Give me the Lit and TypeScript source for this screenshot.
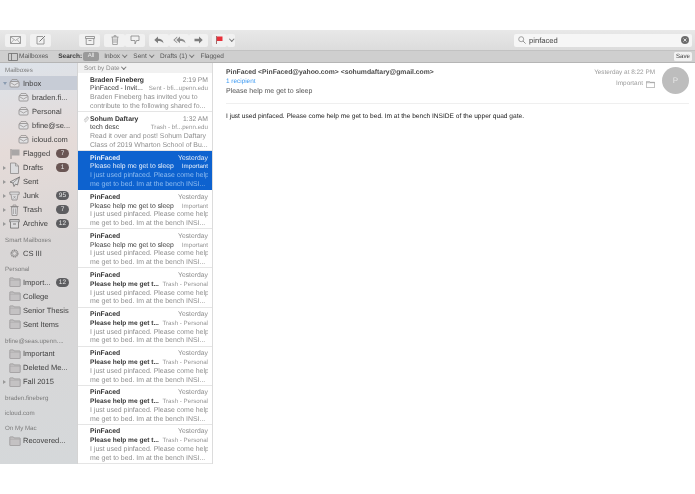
import { LitElement, css, html, svg } from "lit";
import { customElement } from "lit/decorators.js";

const icon = (w: number, h: number, body: unknown, cls = "") =>
  html`<svg class=${cls} width=${w} height=${h} viewBox="0 0 ${w} ${h}" fill="none">${body}</svg>`;

const stroke = "#8d8a8a";

const icons: Record<string, () => unknown> = {
  envelope: () =>
    icon(11, 10, svg`<path d="M1.5 3.5h8a1 1 0 0 1 .5 1v3.5a1 1 0 0 1-1 1H2a1 1 0 0 1-1-1V4.5a1 1 0 0 1 .5-1z" fill="#e2e2e4" stroke=${stroke} stroke-width=".8"/><path d="M1.2 4.5 5.5 7l4.3-2.5" stroke=${stroke} stroke-width=".7"/><path d="M1.5 3.5 3 1.5h5l1.5 2" stroke=${stroke} stroke-width=".7"/>`),
  flag: () =>
    icon(11, 11, svg`<path d="M2 1v10" stroke="#8a8787" stroke-width="1"/><path d="M2.5 1.500h8v6h-8z" fill="#a9a7a7"/>`),
  drafts: () =>
    icon(11, 12, svg`<path d="M1.5 1h5l3 3v7.500h-8z" fill="#dcdcde" stroke=${stroke} stroke-width=".8"/><path d="M6.500 1v3h3" stroke=${stroke} stroke-width=".7"/>`),
  sent: () =>
    icon(11, 11, svg`<path d="M10.500 1 1 6l3 1 1 3.500 1.500-2.500 2 1z" fill="#dcdcde" stroke="#6f6d6d" stroke-width=".8"/><path d="M10.500 1 4 7" stroke="#6f6d6d" stroke-width=".6"/>`),
  junk: () =>
    icon(11, 11, svg`<path d="M.8 2h9.400v2.400H.8z" fill="#dcdcde" stroke=${stroke} stroke-width=".8"/><path d="M2 4.400 3 10h5l1-5.600" fill="#dcdcde" stroke=${stroke} stroke-width=".8"/><path d="M4.500 6 6.500 8.500M6.500 6 4.500 8.500" stroke=${stroke} stroke-width=".6"/>`),
  trash: () =>
    icon(11, 12, svg`<path d="M1.500 2.500h8" stroke=${stroke} stroke-width="1"/><path d="M4 2.400V1h3v1.400" stroke=${stroke} stroke-width=".7"/><path d="M2.500 3 3 11.500h5L8.500 3z" fill="#dcdcde" stroke=${stroke} stroke-width=".8"/><path d="M4.500 4.500v5.500M6.500 4.500v5.500" stroke=${stroke} stroke-width=".6"/>`),
  archive: () =>
    icon(11, 11, svg`<path d="M.8 1.500h9.400v2.600H.8z" fill="#c9c9cb" stroke="#6f6d6d" stroke-width=".8"/><path d="M1.500 4.100v6h8v-6" fill="#dcdcde" stroke="#6f6d6d" stroke-width=".8"/><path d="M4 6h3" stroke="#6f6d6d" stroke-width=".9"/>`),
  gear: () =>
    icon(11, 11, svg`<circle cx="5.500" cy="5.500" r="3.300" stroke="#8b8989" stroke-width="1.500" stroke-dasharray="1.300 .5" fill="none"/><circle cx="5.500" cy="5.500" r="2" stroke="#8b8989" stroke-width=".6"/>`),
  folder: () =>
    icon(12, 10, svg`<path d="M.8 2.800V1.400c0-.3.2-.5.5-.5h3l.8 1h5.600c.3 0 .5.2.5.5v6.700c0 .3-.2.5-.5.5H1.300c-.3 0-.5-.2-.5-.5z" fill="#c4c2c3" stroke="#908e8f" stroke-width=".7"/><path d="M1 3.200h10" stroke="#a6a4a5" stroke-width=".6"/>`),
};

type SideRow = { label: string; icon?: string; badge?: string; arrow?: "open" | "closed"; child?: boolean; sel?: boolean };
type SideGroup = { title: string; rows: SideRow[] };

const groups: SideGroup[] = [
  {
    title: "Mailboxes",
    rows: [
      { label: "Inbox", icon: "envelope", arrow: "open", sel: true },
      { label: "braden.fi...", icon: "envelope", child: true },
      { label: "Personal", icon: "envelope", child: true },
      { label: "bfine@se...", icon: "envelope", child: true },
      { label: "icloud.com", icon: "envelope", child: true },
      { label: "Flagged", icon: "flag", badge: "7" },
      { label: "Drafts", icon: "drafts", badge: "1", arrow: "closed" },
      { label: "Sent", icon: "sent", arrow: "closed" },
      { label: "Junk", icon: "junk", badge: "95", arrow: "closed" },
      { label: "Trash", icon: "trash", badge: "7", arrow: "closed" },
      { label: "Archive", icon: "archive", badge: "12", arrow: "closed" },
    ],
  },
  { title: "Smart Mailboxes", rows: [{ label: "CS III", icon: "gear" }] },
  {
    title: "Personal",
    rows: [
      { label: "Import...", icon: "folder", badge: "12" },
      { label: "College", icon: "folder" },
      { label: "Senior Thesis", icon: "folder" },
      { label: "Sent Items", icon: "folder" },
    ],
  },
  {
    title: "bfine@seas.upenn....",
    rows: [
      { label: "Important", icon: "folder" },
      { label: "Deleted Me...", icon: "folder" },
      { label: "Fall 2015", icon: "folder", arrow: "closed" },
    ],
  },
  { title: "braden.fineberg", rows: [] },
  { title: "icloud.com", rows: [] },
  { title: "On My Mac", rows: [{ label: "Recovered...", icon: "folder" }] },
];

type Msg = { from: string; time: string; subject: string; tag: string; l1: string; l2: string; clip?: boolean; sel?: boolean; strong?: boolean };

const pfBody = { l1: "I just used pinfaced. Please come help", l2: "me get to bed. Im at the bench INSI..." };
const pfImportant = { from: "PinFaced", time: "Yesterday", subject: "Please help me get to sleep", tag: "Important", ...pfBody };
const pfTrash = { from: "PinFaced", time: "Yesterday", subject: "Please help me get t...", tag: "Trash - Personal", strong: true, ...pfBody };

const messages: Msg[] = [
  { from: "Braden Fineberg", time: "2:19 PM", subject: "PinFaced - Invit...", tag: "Sent - bfi...upenn.edu", l1: "Braden Fineberg has invited you to", l2: "contribute to the following shared fo..." },
  { from: "Sohum Daftary", time: "1:32 AM", subject: "tech desc", tag: "Trash - bf...penn.edu", l1: "Read it over and post! Sohum Daftary", l2: "Class of 2019 Wharton School of Bu...", clip: true },
  { ...pfImportant, sel: true },
  pfImportant,
  pfImportant,
  pfTrash,
  pfTrash,
  pfTrash,
  pfTrash,
  pfTrash,
];

@customElement("app-root")
export class AppRoot extends LitElement {
  renderSideRow(r: SideRow) {
    const arrow = r.arrow ? html`<i class="arrow ${r.arrow}"></i>` : "";
    const cls = "side-row" + (r.child ? " child" : "") + (r.sel ? " sel" : "");
    const dark = ["Flagged", "Drafts"].includes(r.label);
    return html`<div class=${cls}>
      <span class="arrow-slot">${arrow}</span>
      <span class="side-icon">${r.icon ? icons[r.icon]() : ""}</span>
      <span class="side-label">${r.label}</span>
      ${r.badge ? html`<span class="badge ${dark ? "brown" : ""}">${r.badge}</span>` : ""}
    </div>`;
  }

  renderMessage(m: Msg) {
    return html`<div class="msg ${m.sel ? "sel" : ""}">
      ${m.clip
        ? html`<svg class="clip" width="6" height="8" viewBox="0 0 6 8" fill="none"><path d="M4.800 2.200 2 5.600c-.7.9.5 1.800 1.200 1L5.200 4c1-1.500-.8-3-2-1.500L1 5.200" stroke="#b5b5b5" stroke-width=".7"/></svg>`
        : ""}
      <div class="line"><span class="from">${m.from}</span><span class="time">${m.time}</span></div>
      <div class="line"><span class="subject ${m.strong ? "strong" : ""}">${m.subject}</span><span class="tag">${m.tag}</span></div>
      <div class="preview">${m.l1}</div>
      <div class="preview">${m.l2}</div>
    </div>`;
  }

  render() {
    return html`
      <div class="top-space"></div>
      <div class="toolbar">
        <div class="tools">
          <button class="btn w21">
            <svg width="11" height="8" viewBox="0 0 11 8" fill="none"><path d="M.5.500h10v7H.5z" stroke="#858585" stroke-width=".8"/><path d="M.5.800 5.500 4.500 10.500.800M.8 7.300 4 3.500M10.200 7.300 7 3.500" stroke="#858585" stroke-width=".6"/></svg>
          </button>
          <button class="btn w21">
            <svg width="10" height="10" viewBox="0 0 10 10" fill="none"><path d="M7 1.500H1v7.500h7V3.500" stroke="#858585" stroke-width=".8"/><path d="M3.500 6.500 9 1" stroke="#777" stroke-width="1"/></svg>
          </button>
          <button class="btn w21 ml-gap">
            <svg width="10" height="9" viewBox="0 0 10 9" fill="none"><path d="M.5.500h9v2h-9zM1.200 2.500v6h7.600v-6" stroke="#858585" stroke-width=".8"/><path d="M3.500 4.500h3" stroke="#858585" stroke-width=".8"/></svg>
          </button>
          <div class="seg">
            <button class="btn w21">
              <svg width="8" height="10" viewBox="0 0 8 10" fill="none"><path d="M.5 2h7M3 2V.7h2V2M1.300 2l.4 7.500h4.600L6.700 2M3 3.500v4.500M5 3.500v4.500" stroke="#858585" stroke-width=".7"/></svg>
            </button>
            <button class="btn w20">
              <svg width="10" height="10" viewBox="0 0 10 10" fill="none"><path d="M1 1h8v4.500H6.500L5 9V5.500H1z" stroke="#858585" stroke-width=".8"/></svg>
            </button>
          </div>
          <div class="seg">
            <button class="btn w20">
              <svg width="10" height="8" viewBox="0 0 10 8"><path d="M4 .500v2.200c3 0 5 1 5.500 4.500C8.500 5.500 6.500 5 4 5v2.300L.3 3.900z" fill="#7c7c7c"/></svg>
            </button>
            <button class="btn w20">
              <svg width="13" height="8" viewBox="0 0 13 8"><path d="M7 .500v2.200c3 0 5 1 5.500 4.500C11.500 5.500 9.500 5 7 5v2.300L3.300 3.900z" fill="#8c8c8c"/><path d="M4.200.500v1.200L1.700 3.900l2.500 2.300v1.100L.3 3.900z" fill="#8c8c8c"/></svg>
            </button>
            <button class="btn w19">
              <svg width="9" height="8" viewBox="0 0 9 8"><path d="M5 .500 8.700 4 5 7.500V5.300H.500V2.700H5z" fill="#7c7c7c"/></svg>
            </button>
          </div>
          <div class="seg">
            <button class="btn w15">
              <svg width="7" height="8" viewBox="0 0 7 8"><path d="M.5 0v8" stroke="#8c4a4a" stroke-width=".8"/><path d="M1 .500h5.500v4.500H1z" fill="#e8303a"/></svg>
            </button>
            <button class="btn w8"><i class="chev"></i></button>
          </div>
        </div>
        <div class="search">
          <svg width="8" height="8" viewBox="0 0 8 8" fill="none"><circle cx="3.200" cy="3.200" r="2.500" stroke="#8a8a8a" stroke-width=".8"/><path d="M5 5l2.600 2.600" stroke="#8a8a8a" stroke-width=".9"/></svg>
          <span class="search-text">pinfaced</span>
          <span class="clear">
            <svg width="8" height="8" viewBox="0 0 8 8"><circle cx="4" cy="4" r="4" fill="#6d6d6d"/><path d="M2.500 2.500l3 3M5.500 2.500l-3 3" stroke="#e8e8e8" stroke-width=".9"/></svg>
          </span>
        </div>
      </div>
      <div class="favbar">
        <svg class="pane" width="10" height="8" viewBox="0 0 10 8" fill="none"><path d="M.5.500h9v7h-9zM3.500.500v7" stroke="#6c6c6c" stroke-width=".8"/></svg>
        <span class="fav boxes">Mailboxes</span>
        <span class="fav bold">Search:</span>
        <span class="pill">All</span>
        <span class="fav f-inbox">Inbox <i class="chev"></i></span>
        <span class="fav">Sent <i class="chev"></i></span>
        <span class="fav">Drafts (1) <i class="chev"></i></span>
        <span class="fav">Flagged</span>
        <span class="save">Save</span>
      </div>
      <div class="main">
        <aside class="sidebar">
          ${groups.map(
            (g) => html`<div class="group">
              <div class="group-title">${g.title}</div>
              ${g.rows.map((r) => this.renderSideRow(r))}
            </div>`
          )}
        </aside>
        <section class="list">
          <div class="sort">Sort by Date <i class="chev"></i></div>
          ${messages.map((m) => this.renderMessage(m))}
        </section>
        <section class="detail">
          <div class="head">
            <div class="head-left">
              <div class="sender">PinFaced &lt;PinFaced@yahoo.com&gt; &lt;sohumdaftary@gmail.com&gt;</div>
              <div class="recipient">1 recipient</div>
              <div class="head-subject">Please help me get to sleep</div>
            </div>
            <div class="head-right">
              <div class="date">Yesterday at 8:22 PM</div>
              <div class="mailbox">
                Important
                <svg width="9" height="7" viewBox="0 0 9 7" fill="none"><path d="M.4 6.600V.4h3l.7.9h4.500v5.300z M.4 1.700h8.200" stroke="#8f8f8f" stroke-width=".6"/></svg>
              </div>
            </div>
            <div class="avatar">P</div>
          </div>
          <div class="body-text">I just used pinfaced. Please come help me get to bed. Im at the bench INSIDE of the upper quad gate.</div>
        </section>
      </div>
    `;
  }

  static styles = css`
    :host {
      display: block;
      width: 695px;
      height: 494px;
      background: #fff;
      font-family: "Liberation Sans", Arial, sans-serif;
      text-rendering: geometricPrecision;
      color: #333;
      overflow: hidden;
      filter: blur(0.25px);
    }
    * {
      box-sizing: border-box;
    }
    .top-space {
      height: 30px;
    }
    .toolbar {
      height: 20px;
      background: linear-gradient(#e8e8e8, #dcdcdc);
      display: flex;
      align-items: center;
      justify-content: space-between;
      padding: 0 3px 0 5px;
    }
    .tools {
      display: flex;
      align-items: center;
      gap: 4px;
    }
    .seg {
      display: flex;
    }
    .btn {
      height: 13px;
      padding: 0;
      border: 0;
      border-radius: 2px;
      background: #f1f1f1;
      display: flex;
      align-items: center;
      justify-content: center;
    }
    .w21 {
      width: 21px;
    }
    .w20 {
      width: 20px;
    }
    .w19 {
      width: 19px;
    }
    .w15 {
      width: 15px;
    }
    .w8 {
      width: 8px;
    }
    .ml-gap {
      margin-left: 24px;
    }
    .chev {
      display: inline-block;
      width: 3.500px;
      height: 3.500px;
      border-right: 1px solid #777;
      border-bottom: 1px solid #777;
      transform: rotate(45deg);
      position: relative;
      top: -1.500px;
      margin-left: 1px;
    }
    .search {
      width: 178px;
      height: 13px;
      background: #f6f6f6;
      border-radius: 2px;
      display: flex;
      align-items: center;
      padding: 0 3px 0 4px;
      gap: 3px;
    }
    .search-text {
      flex: 1;
      font-size: 7.600px;
      color: #444;
    }
    .clear {
      display: flex;
    }
    .favbar {
      height: 13px;
      background: #cfcfcf;
      border-top: 1px solid #c2c2c2;
      border-bottom: 1px solid #b5b5b5;
      display: flex;
      align-items: center;
      padding: 0 3px 0 8px;
      font-size: 6.500px;
      color: #555;
    }
    .pane {
      margin-right: 1px;
    }
    .fav {
      margin-right: 7px;
      white-space: nowrap;
    }
    .fav.boxes {
      margin-right: 10px;
    }
    .fav.bold {
      font-weight: 700;
      margin: 0 1px 0 0;
      color: #3a3a3a;
    }
    .fav.f-inbox {
      margin-left: 5px;
    }
    .pill {
      width: 16px;
      height: 9px;
      line-height: 9px;
      text-align: center;
      background: #9a9a9a;
      color: #eee;
      border-radius: 2px;
      font-size: 6px;
    }
    .save {
      margin-left: auto;
      width: 18px;
      height: 9px;
      line-height: 9px;
      text-align: center;
      background: #f2f2f2;
      border-radius: 1.500px;
      color: #444;
      font-size: 6.200px;
    }
    .main {
      height: 401px;
      display: flex;
    }
    .sidebar {
      width: 77px;
      flex: none;
      padding-top: 3px;
      background: linear-gradient(170deg, #dde3ea 0%, #e5dbd8 22%, #d9d6d6 45%, #d5d8da 100%);
      overflow: hidden;
    }
    .group {
      margin-bottom: 5px;
    }
    .group-title {
      height: 10px;
      line-height: 10px;
      padding-left: 5px;
      font-size: 6.200px;
      color: #7b7b7b;
      white-space: nowrap;
    }
    .side-row {
      height: 14.100px;
      display: flex;
      align-items: center;
      font-size: 7.500px;
      color: #3f3f3f;
      white-space: nowrap;
    }
    .side-row.sel {
      background: #c7ccd6;
    }
    .arrow-slot {
      width: 9px;
      flex: none;
      display: flex;
      justify-content: center;
    }
    .arrow {
      width: 0;
      height: 0;
      display: block;
    }
    .arrow.closed {
      border-left: 3.500px solid #999;
      border-top: 2.200px solid transparent;
      border-bottom: 2.200px solid transparent;
    }
    .arrow.open {
      border-top: 3.500px solid #8a9bb0;
      border-left: 2.200px solid transparent;
      border-right: 2.200px solid transparent;
    }
    .side-icon {
      width: 14px;
      flex: none;
      display: flex;
      align-items: center;
    }
    .child {
      padding-left: 9px;
    }
    .side-label {
      flex: 1;
    }
    .badge {
      height: 9px;
      min-width: 13px;
      padding: 0 3px;
      margin-right: 8px;
      border-radius: 4.500px;
      background: #5d5d60;
      color: #e8e8e8;
      font-size: 6.500px;
      line-height: 9px;
      text-align: center;
    }
    .badge.brown {
      background: #6a5654;
    }
    .list {
      width: 136px;
      flex: none;
      border-left: 1px solid #d4d4d4;
      border-right: 1px solid #dcdcdc;
      overflow: hidden;
      background: #fff;
    }
    .sort {
      height: 10px;
      line-height: 11px;
      padding-left: 6px;
      font-size: 6.400px;
      color: #8a8a8a;
      background: #f1f1f1;
    }
    .msg {
      position: relative;
      height: 39.100px;
      padding: 3.500px 4px 0 12px;
      border-bottom: 1px solid #e5e5e5;
      font-size: 6.800px;
      line-height: 8.800px;
      color: #333;
    }
    .clip {
      position: absolute;
      left: 5px;
      top: 3px;
    }
    .line {
      display: flex;
      justify-content: space-between;
      white-space: nowrap;
    }
    .from {
      font-weight: 700;
      color: #333;
    }
    .time {
      color: #8b8b8b;
    }
    .subject {
      color: #3a3a3a;
    }
    .subject.strong {
      font-weight: 700;
      font-size: 6.600px;
    }
    .tag {
      color: #959595;
      font-size: 6.200px;
    }
    .preview {
      font-size: 6.950px;
      color: #8e8e8e;
      white-space: nowrap;
      overflow: hidden;
    }
    .msg.sel {
      background: #0d62cf;
      border-bottom-color: #0d62cf;
    }
    .msg.sel .from,
    .msg.sel .subject,
    .msg.sel .tag,
    .msg.sel .time {
      color: #e8f0fb;
    }
    .msg.sel .preview {
      color: #8ebcf0;
    }
    .detail {
      flex: 1;
      min-width: 0;
      padding: 4px 6px 0 13px;
      background: #fff;
    }
    .head {
      display: flex;
      height: 37px;
      border-bottom: 1px solid #efefef;
    }
    .head-left {
      flex: 1;
      padding-top: 1px;
      font-size: 7px;
      line-height: 9px;
      color: #555;
    }
    .sender {
      font-weight: 700;
      font-size: 6.800px;
      color: #4a4a4a;
      white-space: nowrap;
    }
    .recipient {
      color: #3f9bf2;
      font-size: 6.400px;
    }
    .head-subject {
      margin-top: 0.500px;
      color: #555;
    }
    .head-right {
      padding-top: 1px;
      font-size: 6.400px;
      line-height: 10px;
      color: #9a9a9a;
      text-align: right;
      margin-right: 7px;
    }
    .mailbox {
      display: flex;
      align-items: center;
      justify-content: flex-end;
      gap: 3px;
      margin-top: 1px;
    }
    .avatar {
      width: 27px;
      height: 27px;
      border-radius: 50%;
      background: #bdbdbd;
      color: #e6e6e6;
      font-size: 8px;
      line-height: 27px;
      text-align: center;
    }
    .body-text {
      margin-top: 8px;
      font-size: 6.600px;
      line-height: 9px;
      color: #222;
      white-space: nowrap;
    }
  `;
}
